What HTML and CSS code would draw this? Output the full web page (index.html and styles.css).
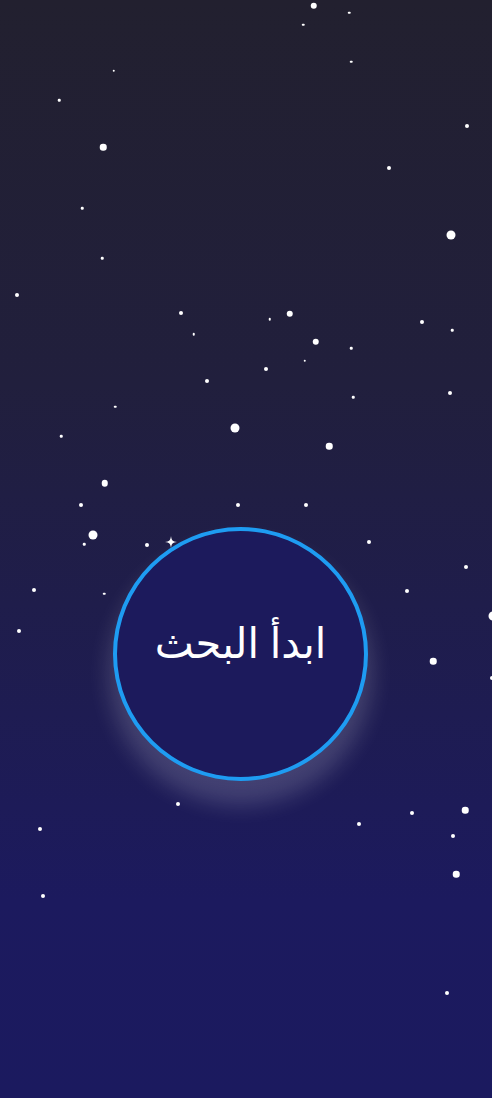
FILE: index.html
```html
<!DOCTYPE html>
<html lang="ar" dir="rtl">
<head>
<meta charset="utf-8">
<title>ابدأ البحث</title>
<link rel="stylesheet" href="styles.css">
</head>
<body>
<main class="sky">
  <div class="stars" aria-hidden="true">
    <span class="star s3" style="left:313.7px;top:5.7px"></span>
    <span class="star s1" style="left:349px;top:12.7px"></span>
    <span class="star s1" style="left:303px;top:24.7px"></span>
    <span class="star s1" style="left:351.3px;top:61.7px"></span>
    <span class="star s1" style="left:113.7px;top:70.7px"></span>
    <span class="star s1" style="left:59.3px;top:100.3px"></span>
    <span class="star s3" style="left:103px;top:147px"></span>
    <span class="star s2" style="left:466.7px;top:126.3px"></span>
    <span class="star s2" style="left:389.3px;top:168.3px"></span>
    <span class="star s1" style="left:82.3px;top:208.3px"></span>
    <span class="star s1" style="left:102.3px;top:258px"></span>
    <span class="star s2" style="left:17px;top:295px"></span>
    <span class="star s2" style="left:181.3px;top:313px"></span>
    <span class="star s1" style="left:193.7px;top:334px"></span>
    <span class="star s4" style="left:451.3px;top:235px"></span>
    <span class="star s1" style="left:269.7px;top:319px"></span>
    <span class="star s3" style="left:289.7px;top:313.7px"></span>
    <span class="star s3" style="left:315.7px;top:341.7px"></span>
    <span class="star s1" style="left:351px;top:348.3px"></span>
    <span class="star s2" style="left:422px;top:322.3px"></span>
    <span class="star s1" style="left:452px;top:330.3px"></span>
    <span class="star s1" style="left:304.7px;top:360.5px"></span>
    <span class="star s2" style="left:207px;top:380.7px"></span>
    <span class="star s1" style="left:115.3px;top:406.7px"></span>
    <span class="star s1" style="left:61px;top:436px"></span>
    <span class="star s4" style="left:235.3px;top:428px"></span>
    <span class="star s3" style="left:104.7px;top:483px"></span>
    <span class="star s2" style="left:81.3px;top:505px"></span>
    <span class="star s2" style="left:238.3px;top:505.3px"></span>
    <span class="star s2" style="left:266px;top:368.7px"></span>
    <span class="star s1" style="left:353px;top:397.3px"></span>
    <span class="star s2" style="left:450.3px;top:393.3px"></span>
    <span class="star s3" style="left:329.3px;top:446.3px"></span>
    <span class="star s2" style="left:306.3px;top:505px"></span>
    <span class="star s4" style="left:93px;top:535px"></span>
    <span class="star s1" style="left:84px;top:544px"></span>
    <span class="star s2" style="left:147px;top:545px"></span>
    <span class="star s2" style="left:369px;top:541.7px"></span>
    <span class="star s2" style="left:466px;top:567px"></span>
    <span class="star s2" style="left:34.3px;top:590px"></span>
    <span class="star s1" style="left:104px;top:593.7px"></span>
    <span class="star s2" style="left:407px;top:591px"></span>
    <span class="star s4" style="left:492.5px;top:616px"></span>
    <span class="star s2" style="left:19px;top:631px"></span>
    <span class="star s3" style="left:433px;top:661px"></span>
    <span class="star s2" style="left:492px;top:677.5px"></span>
    <span class="star s2" style="left:178.3px;top:804px"></span>
    <span class="star s2" style="left:40.3px;top:829px"></span>
    <span class="star s2" style="left:358.7px;top:823.7px"></span>
    <span class="star s2" style="left:412px;top:813.3px"></span>
    <span class="star s3" style="left:465.3px;top:810.3px"></span>
    <span class="star s2" style="left:452.7px;top:835.7px"></span>
    <span class="star s3" style="left:456px;top:874.3px"></span>
    <span class="star s2" style="left:43.3px;top:896px"></span>
    <span class="star s2" style="left:447.3px;top:993px"></span>
    <svg class="sparkle" style="left:171px;top:542px" viewBox="0 0 12 12" width="12" height="12"><path d="M6 0 C6.6 4.4 7.6 5.4 12 6 C7.6 6.6 6.6 7.6 6 12 C5.4 7.6 4.4 6.6 0 6 C4.4 5.4 5.4 4.4 6 0 Z" fill="#ffffff"/></svg>
  </div>
  <button class="orb" type="button"><span class="orb-label">ابدأ البحث</span></button>
</main>
</body>
</html>
```

FILE: styles.css
```css
html, body {
  margin: 0;
  padding: 0;
  height: 100%;
}

body {
  background: #1c1a5e;
  font-family: "Noto Sans", "DejaVu Sans", sans-serif;
  overflow: hidden;
}

.sky {
  position: relative;
  height: 1098px;
  box-sizing: border-box;
  padding-top: 527px;
  padding-right: 11px;
  display: flex;
  justify-content: center;
  align-items: flex-start;
  background: linear-gradient(180deg, #22202f 0%, #211f3d 35%, #1e1c52 65%, #1c1a5e 82%, #1b1a5f 100%);
  overflow: hidden;
}

.stars {
  position: absolute;
  inset: 0;
  pointer-events: none;
}

.star {
  position: absolute;
  display: block;
  border-radius: 50%;
  background: #ffffff;
  transform: translate(-50%, -50%);
}

.s1 { width: 2.5px; height: 2.5px; }
.s2 { width: 4px; height: 4px; }
.s3 { width: 6.5px; height: 6.5px; }
.s4 { width: 9px; height: 9px; }

.sparkle {
  position: absolute;
  transform: translate(-50%, -50%);
}

.orb {
  position: relative;
  width: 255px;
  height: 254px;
  box-sizing: border-box;
  border: 4px solid #1e9cf2;
  border-radius: 50%;
  background: #1c1a5c;
  box-shadow: 0 20px 22px 4px rgba(255, 255, 255, 0.17);
  display: flex;
  align-items: center;
  justify-content: center;
  padding: 0 0 22px 0;
  margin: 0;
  cursor: pointer;
  font: inherit;
}

.orb-label {
  color: #ffffff;
  font-family: "Noto Sans", "DejaVu Sans", sans-serif;
  font-size: 41.5px;
  line-height: 1;
  white-space: nowrap;
}
```
